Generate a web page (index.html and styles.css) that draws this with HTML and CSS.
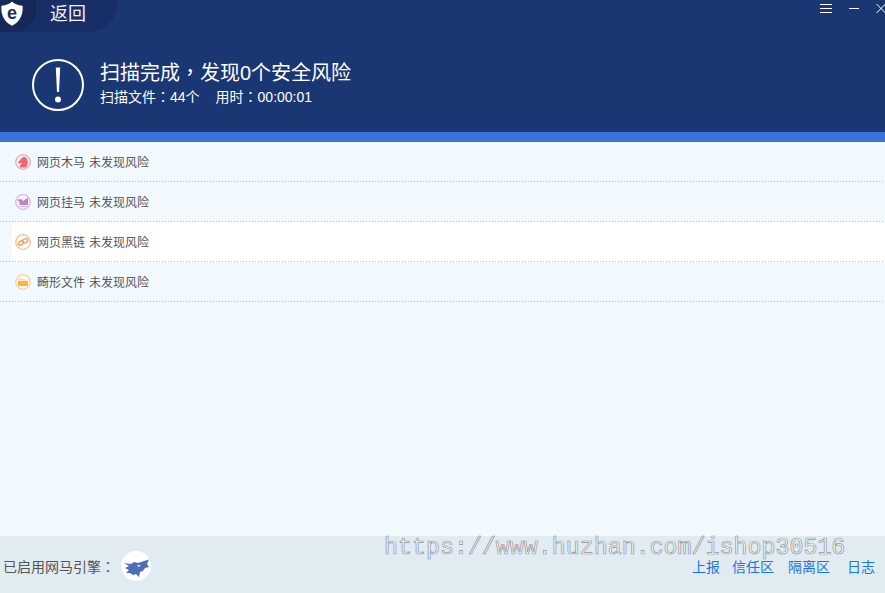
FILE: index.html
```html
<!DOCTYPE html>
<html lang="zh-CN">
<head>
<meta charset="utf-8">
<title>扫描完成</title>
<link rel="stylesheet" href="styles.css">
</head>
<body>
<div class="app">
  <header class="hero">
    <div class="titlebar">
      <a class="back">
        <span class="logo-disc">
          <svg class="logo" viewBox="0 0 22 25" width="22" height="25">
            <path d="M11 0.5 C13.5 3 16.5 4.2 21.5 4.8 C22.5 13 19 21 11 24.8 C3 21 -0.5 13 0.5 4.8 C5.5 4.2 8.5 3 11 0.5Z" fill="#fff"/>
            <text class="logo-e" x="11" y="17.5" text-anchor="middle">e</text>
          </svg>
        </span>
        <span class="back-label">返回</span>
      </a>
      <div class="win-controls">
        <svg width="12" height="9" viewBox="0 0 12 9"><path d="M0 .5H12M0 4.5H12M0 8.5H12" stroke="#fff" fill="none"/></svg>
        <svg width="10" height="9" viewBox="0 0 10 9"><path d="M0 4.5H10" stroke="#fff" fill="none"/></svg>
        <svg width="10" height="9" viewBox="0 0 10 9"><path d="M.5 0L9.5 9M9.5 0L.5 9" stroke="#fff" fill="none"/></svg>
      </div>
    </div>
    <div class="summary">
      <svg class="alert" viewBox="0 0 52 52" width="52" height="52">
        <circle cx="26" cy="26" r="25" fill="none" stroke="#fff" stroke-width="2"/>
        <path d="M23.8 8.5H28.2L27 33H25Z" fill="#fff"/>
        <circle cx="26" cy="40.5" r="3" fill="#fff"/>
      </svg>
      <div class="summary-text">
        <h1 class="summary-title">扫描完成<span class="punct" lang="zh-TW">，</span>发现0个安全风险</h1>
        <p class="summary-sub"><span>扫描文件<span class="punct" lang="zh-TW">：</span>44个</span><span>用时<span class="punct" lang="zh-TW">：</span>00:00:01</span></p>
      </div>
    </div>
  </header>
  <div class="band"></div>
  <main class="list">
    <div class="row">
      <svg class="row-icon" viewBox="0 0 16 16" width="16" height="16">
        <circle cx="8" cy="8" r="7.3" fill="#fdf3f5" stroke="#f2a6b2" stroke-width="1.3"/>
        <path d="M9 2.6 C11.5 3.5 13 6 12.8 9 C12.6 11 11.8 12.6 11 13.4 H4.6 C4.6 11.4 6.5 10 7.2 8.6 C6 9.2 5 9.8 4 9.5 L3 8 C5 6.5 6.2 4.2 9 2.6Z" fill="#ec6676"/>
      </svg>
      <span class="row-text">网页木马 未发现风险</span>
    </div>
    <div class="row">
      <svg class="row-icon" viewBox="0 0 16 16" width="16" height="16">
        <circle cx="8" cy="8" r="7.3" fill="#fbf5fb" stroke="#d9b6dc" stroke-width="1.3"/>
        <path d="M2.8 5.2H6.6L8 7L13 3.6V11H4.6V8.2L2.8 6.8Z" fill="#bd86bf"/>
        <path d="M3.5 12.5H12.5" stroke="#d9b6dc"/>
      </svg>
      <span class="row-text">网页挂马 未发现风险</span>
    </div>
    <div class="row row-active">
      <svg class="row-icon" viewBox="0 0 16 16" width="16" height="16">
        <circle cx="8" cy="8" r="7.3" fill="#fff" stroke="#f9bd92" stroke-width="1.3"/>
        <g fill="none" stroke="#f5a36c" stroke-width="1.5">
          <rect x="3.2" y="7.2" width="5.4" height="3.6" rx="1.8" transform="rotate(-30 5.9 9)"/>
          <rect x="7.4" y="5" width="5.4" height="3.6" rx="1.8" transform="rotate(-30 10.1 6.8)"/>
        </g>
      </svg>
      <span class="row-text">网页黑链 未发现风险</span>
    </div>
    <div class="row">
      <svg class="row-icon" viewBox="0 0 16 16" width="16" height="16">
        <circle cx="8" cy="8" r="7.3" fill="#fffaf2" stroke="#f8d09a" stroke-width="1.3"/>
        <path d="M3.4 4.4H7.5L8.5 5.4H12.6V6.6H3.4Z" fill="#fbdca8"/>
        <path d="M3 7H13V12H3Z" fill="#f5b548"/>
      </svg>
      <span class="row-text">畸形文件 未发现风险</span>
    </div>
  </main>
  <footer class="footer">
    <div class="engine">
      <span class="engine-label">已启用网马引擎<span class="punct" lang="zh-TW">：</span></span>
      <span class="engine-badge">
        <svg viewBox="0 0 30 30" width="30" height="30">
          <path d="M3 12 L10 13 L13 11 L17 12 L23 10 L28 8.5 L26 13 L28 16 L24 17 L22 20 L19 21 L18 26 L15 23 L12 24 L9 22 L5 22 L8 19 L4 17 L8 15Z" fill="#4e6db7"/>
          <path d="M16 14L20 14.5L17.5 16Z" fill="#fff"/>
        </svg>
      </span>
    </div>
    <nav class="links">
      <a>上报</a><a class="l-trust">信任区</a><a class="l-quar">隔离区</a><a class="l-log">日志</a>
    </nav>
  </footer>
  <div class="watermark">https://www.huzhan.com/ishop30516</div>
</div>
</body>
</html>
```

FILE: styles.css
```css
* { box-sizing: border-box; }
html, body { margin: 0; padding: 0; }
body {
  font-family: "Liberation Sans", "Noto Sans CJK SC", sans-serif;
  background: #f2faff;
}
.punct { font-family: "Noto Sans CJK TC", sans-serif; }
.app {
  position: relative;
  width: 885px;
  height: 593px;
  display: flex;
  flex-direction: column;
  overflow: hidden;
}
.hero {
  height: 132px;
  background: #1b3773;
  color: #fff;
}
.titlebar {
  height: 32px;
  display: flex;
  justify-content: space-between;
  align-items: flex-start;
}
.back {
  width: 118px;
  height: 32px;
  background: #182e66;
  border-bottom-right-radius: 30px;
  display: flex;
  align-items: center;
}
.logo-disc {
  width: 36px;
  height: 32px;
  background: #152857;
  border-bottom-right-radius: 22px;
  display: flex;
  align-items: flex-start;
}
.logo { display: block; margin: 1px 0 0 1px; }
.logo-e {
  font-family: "Liberation Sans", sans-serif;
  font-size: 18px;
  font-weight: 700;
  fill: #1a2f66;
}
.back-label {
  margin-left: 14px;
  font-size: 18px;
  line-height: 26px;
  margin-bottom: 4px;
  color: #f0f3f8;
}
.win-controls {
  display: flex;
  gap: 17px;
  padding: 4px 0 0;
  margin-right: -1px;
}
.win-controls svg { display: block; }
.summary {
  display: flex;
  align-items: center;
  gap: 16px;
  padding: 27px 0 0 32px;
}
.alert { display: block; flex: none; }
.summary-text { margin-bottom: 4px; }
.summary-title {
  margin: 0;
  font-size: 20px;
  line-height: 26px;
  font-weight: 400;
}
.summary-sub {
  margin: 0;
  font-size: 14px;
  line-height: 20px;
  display: flex;
  gap: 16px;
}
.band {
  height: 10px;
  background: #3a72de;
}
.list { flex: 1; }
.row {
  height: 40px;
  display: flex;
  align-items: center;
  padding-left: 15px;
  position: relative;
}
.row::after {
  content: "";
  position: absolute;
  left: 0;
  right: 0;
  bottom: 0;
  height: 1px;
  background: repeating-linear-gradient(90deg, #a5bbd2 0 1px, transparent 1px 3px);
}
.row-active::before {
  content: "";
  position: absolute;
  left: 12px;
  right: 0;
  top: 0;
  bottom: 0;
  background: #fff;
}
.row-icon { display: block; flex: none; position: relative; }
.row-text {
  position: relative;
  margin: 2px 0 0 6px;
  font-size: 12px;
  line-height: 16px;
  color: #555;
  word-spacing: 0.7px;
}
.footer {
  height: 57px;
  background: #e1ebf2;
  display: flex;
  justify-content: space-between;
  align-items: center;
  padding: 4px 10px 0 3px;
}
.engine { display: flex; align-items: center; gap: 6px; }
.engine-label { font-size: 14px; line-height: 20px; color: #555; }
.engine-badge {
  width: 30px;
  height: 30px;
  border-radius: 50%;
  background: #fff;
  display: block;
  margin-bottom: 2px;
}
.engine-badge svg { display: block; }
.links { display: flex; font-size: 14px; line-height: 16px; color: #1878e0; }
.l-trust { margin-left: 12px; }
.l-quar { margin-left: 14px; }
.l-log { margin-left: 17px; }
.watermark {
  position: absolute;
  left: 384px;
  top: 538px;
  font-family: "Liberation Mono", monospace;
  font-size: 23.3px;
  line-height: 20px;
  color: rgba(255, 255, 255, 0.6);
  -webkit-text-stroke: 0.7px #969696;
  white-space: nowrap;
}
```
